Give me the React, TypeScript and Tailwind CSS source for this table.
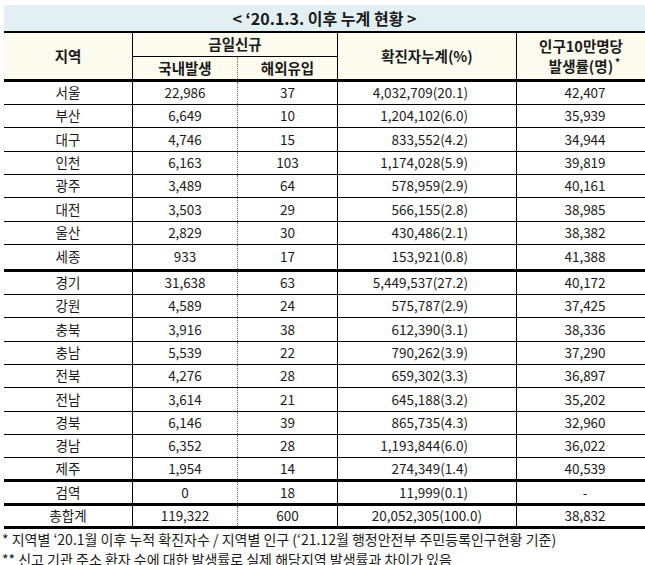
const rows: [string, string, string, string, string][] = [
  ["서울", "22,986", "37", "4,032,709(20.1)", "42,407"],
  ["부산", "6,649", "10", "1,204,102(6.0)", "35,939"],
  ["대구", "4,746", "15", "833,552(4.2)", "34,944"],
  ["인천", "6,163", "103", "1,174,028(5.9)", "39,819"],
  ["광주", "3,489", "64", "578,959(2.9)", "40,161"],
  ["대전", "3,503", "29", "566,155(2.8)", "38,985"],
  ["울산", "2,829", "30", "430,486(2.1)", "38,382"],
  ["세종", "933", "17", "153,921(0.8)", "41,388"],
  ["경기", "31,638", "63", "5,449,537(27.2)", "40,172"],
  ["강원", "4,589", "24", "575,787(2.9)", "37,425"],
  ["충북", "3,916", "38", "612,390(3.1)", "38,336"],
  ["충남", "5,539", "22", "790,262(3.9)", "37,290"],
  ["전북", "4,276", "28", "659,302(3.3)", "36,897"],
  ["전남", "3,614", "21", "645,188(3.2)", "35,202"],
  ["경북", "6,146", "39", "865,735(4.3)", "32,960"],
  ["경남", "6,352", "28", "1,193,844(6.0)", "36,022"],
  ["제주", "1,954", "14", "274,349(1.4)", "40,539"],
  ["검역", "0", "18", "11,999(0.1)", "-"],
  ["총합계", "119,322", "600", "20,052,305(100.0)", "38,832"],
];

// row box heights; the thick-ruled ones carry a 3px bottom line
const rowClass: Record<number, string> = {
  2: "flex h-[24px] border-b border-black",
  5: "flex h-[24px] border-b border-black",
  7: "flex h-[27px] border-b-[3px] border-black",
  10: "flex h-[24px] border-b border-black",
  13: "flex h-[24px] border-b border-black",
  16: "flex h-[24px] border-b-[3px] border-black",
  17: "flex h-[24px] border-b-[3px] border-black",
  18: "flex h-[23px] border-b-[3px] border-black",
};

export default function App() {
  return (
    <div className="w-[645px] h-[565px] overflow-hidden bg-white font-['Noto_Sans_CJK_KR',sans-serif] text-[#1a1a1a]">
      <div className="ml-[4px] mt-[5px] h-[26px] bg-[#e3f0f3] flex items-center justify-center text-[16px] font-bold leading-none">
        &lt; ‘20.1.3. 이후 누계 현황 &gt;
      </div>

      <div className="ml-[4px] flex h-[51px] bg-[#fdfbee] border-t-2 border-b-[3px] border-black text-[14.5px] font-bold leading-none">
        <div className="w-[129px] border-r border-black flex items-center justify-center">지역</div>
        <div className="w-[205px] border-r border-black flex flex-col">
          <div className="h-[24px] border-b border-black flex items-center justify-center">금일신규</div>
          <div className="flex-1 flex">
            <div className="w-[105px] border-r border-dotted border-gray-500 flex items-center justify-center">국내발생</div>
            <div className="flex-1 flex items-center justify-center">해외유입</div>
          </div>
        </div>
        <div className="w-[179px] border-r border-black flex items-center justify-center">확진자누계(%)</div>
        <div className="flex-1 flex flex-col items-center justify-center gap-[6px]">
          <span>인구10만명당</span>
          <span className="relative">
            발생률(명)
            <span className="absolute -right-[7px] -top-[2px] text-[10px] leading-none">*</span>
          </span>
        </div>
      </div>

      <div className="ml-[4px] text-[13.5px] leading-none">
        {rows.map((r, i) => (
          <div key={r[0]} className={rowClass[i] ?? "flex h-[23px] border-b border-black"}>
            <div className="w-[129px] border-r border-black flex items-center justify-center">{r[0]}</div>
            <div className="w-[105px] border-r border-dotted border-gray-500 flex items-center justify-center">{r[1]}</div>
            <div className="w-[100px] border-r border-black flex items-center justify-center">{r[2]}</div>
            <div
              className={
                i === 18
                  ? "w-[179px] border-r border-black flex items-center justify-center"
                  : "w-[179px] border-r border-black flex items-center justify-end pr-[48px]"
              }
            >
              {r[3]}
            </div>
            <div className="flex-1 flex items-center justify-center pl-2">{r[4]}</div>
          </div>
        ))}
      </div>

      <div className="pl-[2px] text-[14px] leading-[20px]">
        <p>* 지역별 ‘20.1월 이후 누적 확진자수 / 지역별 인구 (‘21.12월 행정안전부 주민등록인구현황 기준)</p>
        <p>** 신고 기관 주소 환자 수에 대한 발생률로 실제 해당지역 발생률과 차이가 있음</p>
      </div>
    </div>
  );
}
